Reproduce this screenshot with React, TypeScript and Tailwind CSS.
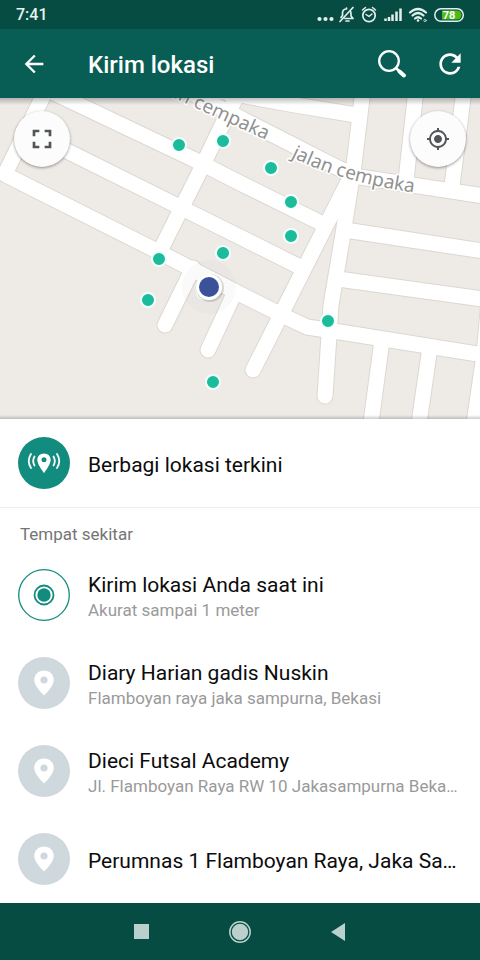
import React from "react";
import { MdArrowBack, MdFullscreen, MdMyLocation, MdRefresh } from "react-icons/md";

const roads = [
  "M5 174 L46 90",
  "M50 91 L193 159 L240 183 L325 225",
  "M24 130 L63 149 L240 237 L302 268",
  "M6 175 L155 250 L240 294 L288 318 L307 327 L340 332 L490 356",
  "M240 90 L225 119 L200 171 L162 247",
  "M170 82 L240 118 L340 169 L360 177 L490 197",
  "M200 88 L240 95 L295 105 L356 115",
  "M363 90 L354 165 L342 240 L331 305 L325 396",
  "M350 178 L253 370",
  "M416 90 L406 180",
  "M464 90 L452 186",
  "M345 230 L490 252",
  "M338 279 L490 300",
  "M382 340 L370 430",
  "M430 347 L418 430",
  "M489 300 L484 355 L473 430",
  "M193 268 L165 325",
  "M234 294 L208 350",
];

const places = [
  [179, 145], [223, 141], [271, 168], [291, 202], [291, 236], [223, 253],
  [159, 259], [148, 300], [204, 292], [328, 321], [213, 382],
];

function StreetMap() {
  return (
    <svg viewBox="0 98 480 321" preserveAspectRatio="xMidYMid slice" className="block h-full w-full" role="img" aria-label="Peta">
      <defs>
        <path id="street-upper" d="M137 81 L266 140" />
        <path id="street-lower" d="M291 157 Q345 184 425 194" />
        <linearGradient id="top-shade" x1="0" y1="0" x2="0" y2="1">
          <stop offset="0" stopColor="#000" stopOpacity="0.25" />
          <stop offset="1" stopColor="#000" stopOpacity="0" />
        </linearGradient>
      </defs>
      <rect x="0" y="98" width="480" height="321" fill="#eeebe7" />
      <g fill="none" strokeLinecap="round" strokeLinejoin="round">
        <g stroke="#dcd7d0" strokeWidth="17">
          {roads.map((d) => <path key={d} d={d} />)}
        </g>
        <g stroke="#ffffff" strokeWidth="15">
          {roads.map((d) => <path key={d} d={d} />)}
        </g>
      </g>
      <g fontFamily="'Noto Sans', sans-serif" fontSize="19" fill="#919191" stroke="#ffffff" strokeWidth="3" strokeLinejoin="round" paintOrder="stroke">
        <text textAnchor="end"><textPath href="#street-upper" startOffset="100%">an cempaka</textPath></text>
        <text><textPath href="#street-lower">jalan cempaka</textPath></text>
      </g>
      <circle cx="209" cy="287" r="27" fill="#5a6478" fillOpacity="0.03" />
      {places.map(([x, y]) => (
        <circle key={`${x}-${y}`} cx={x} cy={y} r="7" fill="#1abc9c" stroke="#f2fffc" strokeWidth="2" />
      ))}
      <circle cx="210" cy="288" r="14" fill="#000" fillOpacity="0.14" />
      <circle cx="209" cy="287" r="13" fill="#fff" />
      <circle cx="209" cy="287" r="10" fill="#3b529b" />
      <rect x="0" y="98" width="480" height="7" fill="url(#top-shade)" />
    </svg>
  );
}

function StatusIcons() {
  return (
    <svg viewBox="316 4 150 22" className="h-[22px] w-[150px]" fill="none" stroke="#e3efec" strokeWidth="1.5" strokeLinecap="round" strokeLinejoin="round" aria-hidden="true">
      <g fill="#e3efec" stroke="none">
        <circle cx="319.500" cy="19" r="2.100" />
        <circle cx="325.500" cy="19" r="2.100" />
        <circle cx="331.500" cy="19" r="2.100" />
      </g>
      <path strokeWidth="1.700" d="M341 17.500 L342.500 15.500 V13 Q342.500 9.500 346 9 M350 10.500 Q351 11.500 351 14 V16 L353 18.500 H345 M346 21 H349 M340 21.500 L353 7.500 M346.500 9 V8" />
      <circle cx="369" cy="15.500" r="6.200" strokeWidth="1.700" />
      <path d="M366 14.500 L369 16.500 L372 14 M362.500 10 L365.500 7.500 M375.500 10 L372.500 7.500" />
      <g strokeWidth="2.500" strokeLinecap="butt">
        <path d="M385.500 18.500 V21 M389 17 V21 M392.500 14.500 V21 M396.500 11.500 V21 M400.500 8.500 V21" />
      </g>
      <path strokeWidth="2.200" d="M410 12.500 Q418 5.500 426 12.500 M412.500 15.500 Q418 10.500 423.500 15.500 M415 18.500 Q418 16 421 18.500" />
      <circle cx="418" cy="20.500" r="1.300" fill="#e3efec" stroke="none" />
      <circle cx="425" cy="20.500" r="1.200" strokeWidth="1" opacity="0.7" />
      <rect x="434.800" y="8.800" width="28.500" height="12.500" rx="6.200" />
      <path d="M442 10.500 H457 A4.500 4.500 0 0 1 457 19.500 H442 Z" fill="#4cbb17" stroke="none" />
      <text x="449" y="19" textAnchor="middle" fontFamily="Roboto, sans-serif" fontWeight="700" fontSize="11" fill="#fff" stroke="none">78</text>
    </svg>
  );
}

function SearchIcon() {
  return (
    <svg viewBox="0 0 32 32" className="size-8" fill="none" stroke="#fff" strokeLinecap="round" aria-hidden="true">
      <circle cx="13" cy="13" r="9.800" strokeWidth="2.300" />
      <path d="M20.500 20.500 L23 23" strokeWidth="2.500" />
      <path d="M23.500 23.500 L28 27.500" strokeWidth="4" />
    </svg>
  );
}

function LiveIcon() {
  return (
    <span className="grid size-[52px] shrink-0 place-items-center rounded-full bg-[#128c7e]">
      <svg viewBox="0 0 52 52" className="size-[52px]" fill="none" aria-hidden="true">
        <path fillRule="evenodd" fill="#fff" d="M26 16.500 C22.200 16.500 19.300 19.300 19.300 23 C19.300 27.500 26 36 26 36 S32.700 27.500 32.700 23 C32.700 19.300 29.800 16.500 26 16.500 Z M26 20.300 A2.500 2.500 0 1 1 26 25.300 A2.500 2.500 0 1 1 26 20.300 Z" />
        <path stroke="#fff" strokeWidth="1.800" strokeLinecap="round" d="M16.500 19.500 Q13.800 24 16.500 28.500 M35.500 19.500 Q38.200 24 35.500 28.500 M13 17 Q8.500 24 13 31 M39 17 Q43.500 24 39 31" />
      </svg>
    </span>
  );
}

function CurrentIcon() {
  return (
    <svg viewBox="0 0 52 52" className="size-[52px] shrink-0" fill="none" stroke="#128c7e" aria-hidden="true">
      <circle cx="26" cy="26" r="25.300" strokeWidth="1.300" />
      <circle cx="26" cy="26" r="9.500" strokeWidth="1.800" />
      <circle cx="26" cy="26" r="6.700" fill="#128c7e" stroke="none" />
    </svg>
  );
}

function PlaceIcon() {
  return (
    <span className="grid size-[52px] shrink-0 place-items-center rounded-full bg-[#cfd8dd]">
      <svg viewBox="0 0 52 52" className="size-[52px]" aria-hidden="true">
        <path fill="#fff" d="M26 13.500 C20.400 13.500 16.200 17.600 16.200 23 C16.200 29.500 26 38.500 26 38.500 S35.800 29.500 35.800 23 C35.800 17.600 31.600 13.500 26 13.500 Z" />
        <circle cx="26" cy="23" r="3.600" fill="#cfd8dd" />
      </svg>
    </span>
  );
}

type RowProps = { icon: React.ReactNode; title: string; detail?: string };

function Row({ icon, title, detail }: RowProps) {
  return (
    <button type="button" className="flex h-[88px] w-full items-center gap-[18px] pl-[18px] pr-3 text-left">
      {icon}
      <span className="flex min-w-0 flex-1 flex-col pt-1">
        <span className="truncate text-[21px] leading-[26px] text-[#0c0c0c]">{title}</span>
        {detail && <span className="truncate text-[17px] leading-6 text-[#9a9a9a]">{detail}</span>}
      </span>
    </button>
  );
}

export default function App() {
  return (
    <div className="flex min-h-screen flex-col bg-white font-[Roboto,sans-serif]">
      <div className="flex h-[29px] items-center justify-between bg-[#064c43] pl-4 pr-[14px] text-[#e8f3f1]">
        <span className="text-base font-medium">7:41</span>
        <StatusIcons />
      </div>

      <header className="flex h-[69px] items-center bg-[#085e54] pl-5 pr-[14px] text-white">
        <button type="button" aria-label="Kembali"><MdArrowBack className="size-7" /></button>
        <h1 className="flex-1 pl-10 pt-0.5 text-2xl font-medium">Kirim lokasi</h1>
        <div className="flex items-center gap-[26px]">
          <button type="button" aria-label="Cari"><SearchIcon /></button>
          <button type="button" aria-label="Muat ulang"><MdRefresh className="size-8" /></button>
        </div>
      </header>

      <section className="relative h-[321px]">
        <StreetMap />
        <button type="button" aria-label="Layar penuh" className="absolute left-[14px] top-[13px] grid size-14 place-items-center rounded-full bg-[#fcfcfc] text-[#505557] shadow-[0_1px_3px_rgba(0,0,0,0.4)]">
          <MdFullscreen className="size-8" />
        </button>
        <button type="button" aria-label="Lokasi saya" className="absolute right-[14px] top-[13px] grid size-14 place-items-center rounded-full bg-[#fcfcfc] text-[#505557] shadow-[0_1px_3px_rgba(0,0,0,0.4)]">
          <MdMyLocation className="size-6" />
        </button>
        <div className="absolute inset-x-0 bottom-0 h-1 bg-linear-to-b from-transparent to-black/20" />
      </section>

      <main className="flex-1">
        <div className="border-b border-[#ececec]">
          <Row icon={<LiveIcon />} title="Berbagi lokasi terkini" />
        </div>
        <h2 className="px-5 pb-[5px] pt-[14px] text-[17px] leading-6 text-[#757575]">Tempat sekitar</h2>
        <Row icon={<CurrentIcon />} title="Kirim lokasi Anda saat ini" detail="Akurat sampai 1 meter" />
        <Row icon={<PlaceIcon />} title="Diary Harian gadis Nuskin" detail="Flamboyan raya jaka sampurna, Bekasi" />
        <Row icon={<PlaceIcon />} title="Dieci Futsal Academy" detail="Jl. Flamboyan Raya RW 10 Jakasampurna Beka…" />
        <Row icon={<PlaceIcon />} title="Perumnas 1 Flamboyan Raya, Jaka Sa…" />
      </main>

      <nav className="flex h-[57px] items-center justify-center bg-[#064c43] text-[#b9d0cc]">
        <button type="button" aria-label="Terbaru" className="grid w-[99px] place-items-center">
          <span className="size-[15px] bg-[#b9d0cc]" />
        </button>
        <button type="button" aria-label="Beranda" className="grid w-[99px] place-items-center">
          <svg viewBox="0 0 24 24" className="size-6" aria-hidden="true">
            <circle cx="12" cy="12" r="10.200" fill="none" stroke="currentColor" strokeWidth="1.500" />
            <circle cx="12" cy="12" r="8.200" fill="currentColor" />
          </svg>
        </button>
        <button type="button" aria-label="Kembali ke layar sebelumnya" className="grid w-[99px] place-items-center">
          <svg viewBox="0 0 16 18" className="h-[18px] w-4" aria-hidden="true">
            <path d="M0 9 L14 0 V18 Z" fill="currentColor" />
          </svg>
        </button>
      </nav>
    </div>
  );
}
